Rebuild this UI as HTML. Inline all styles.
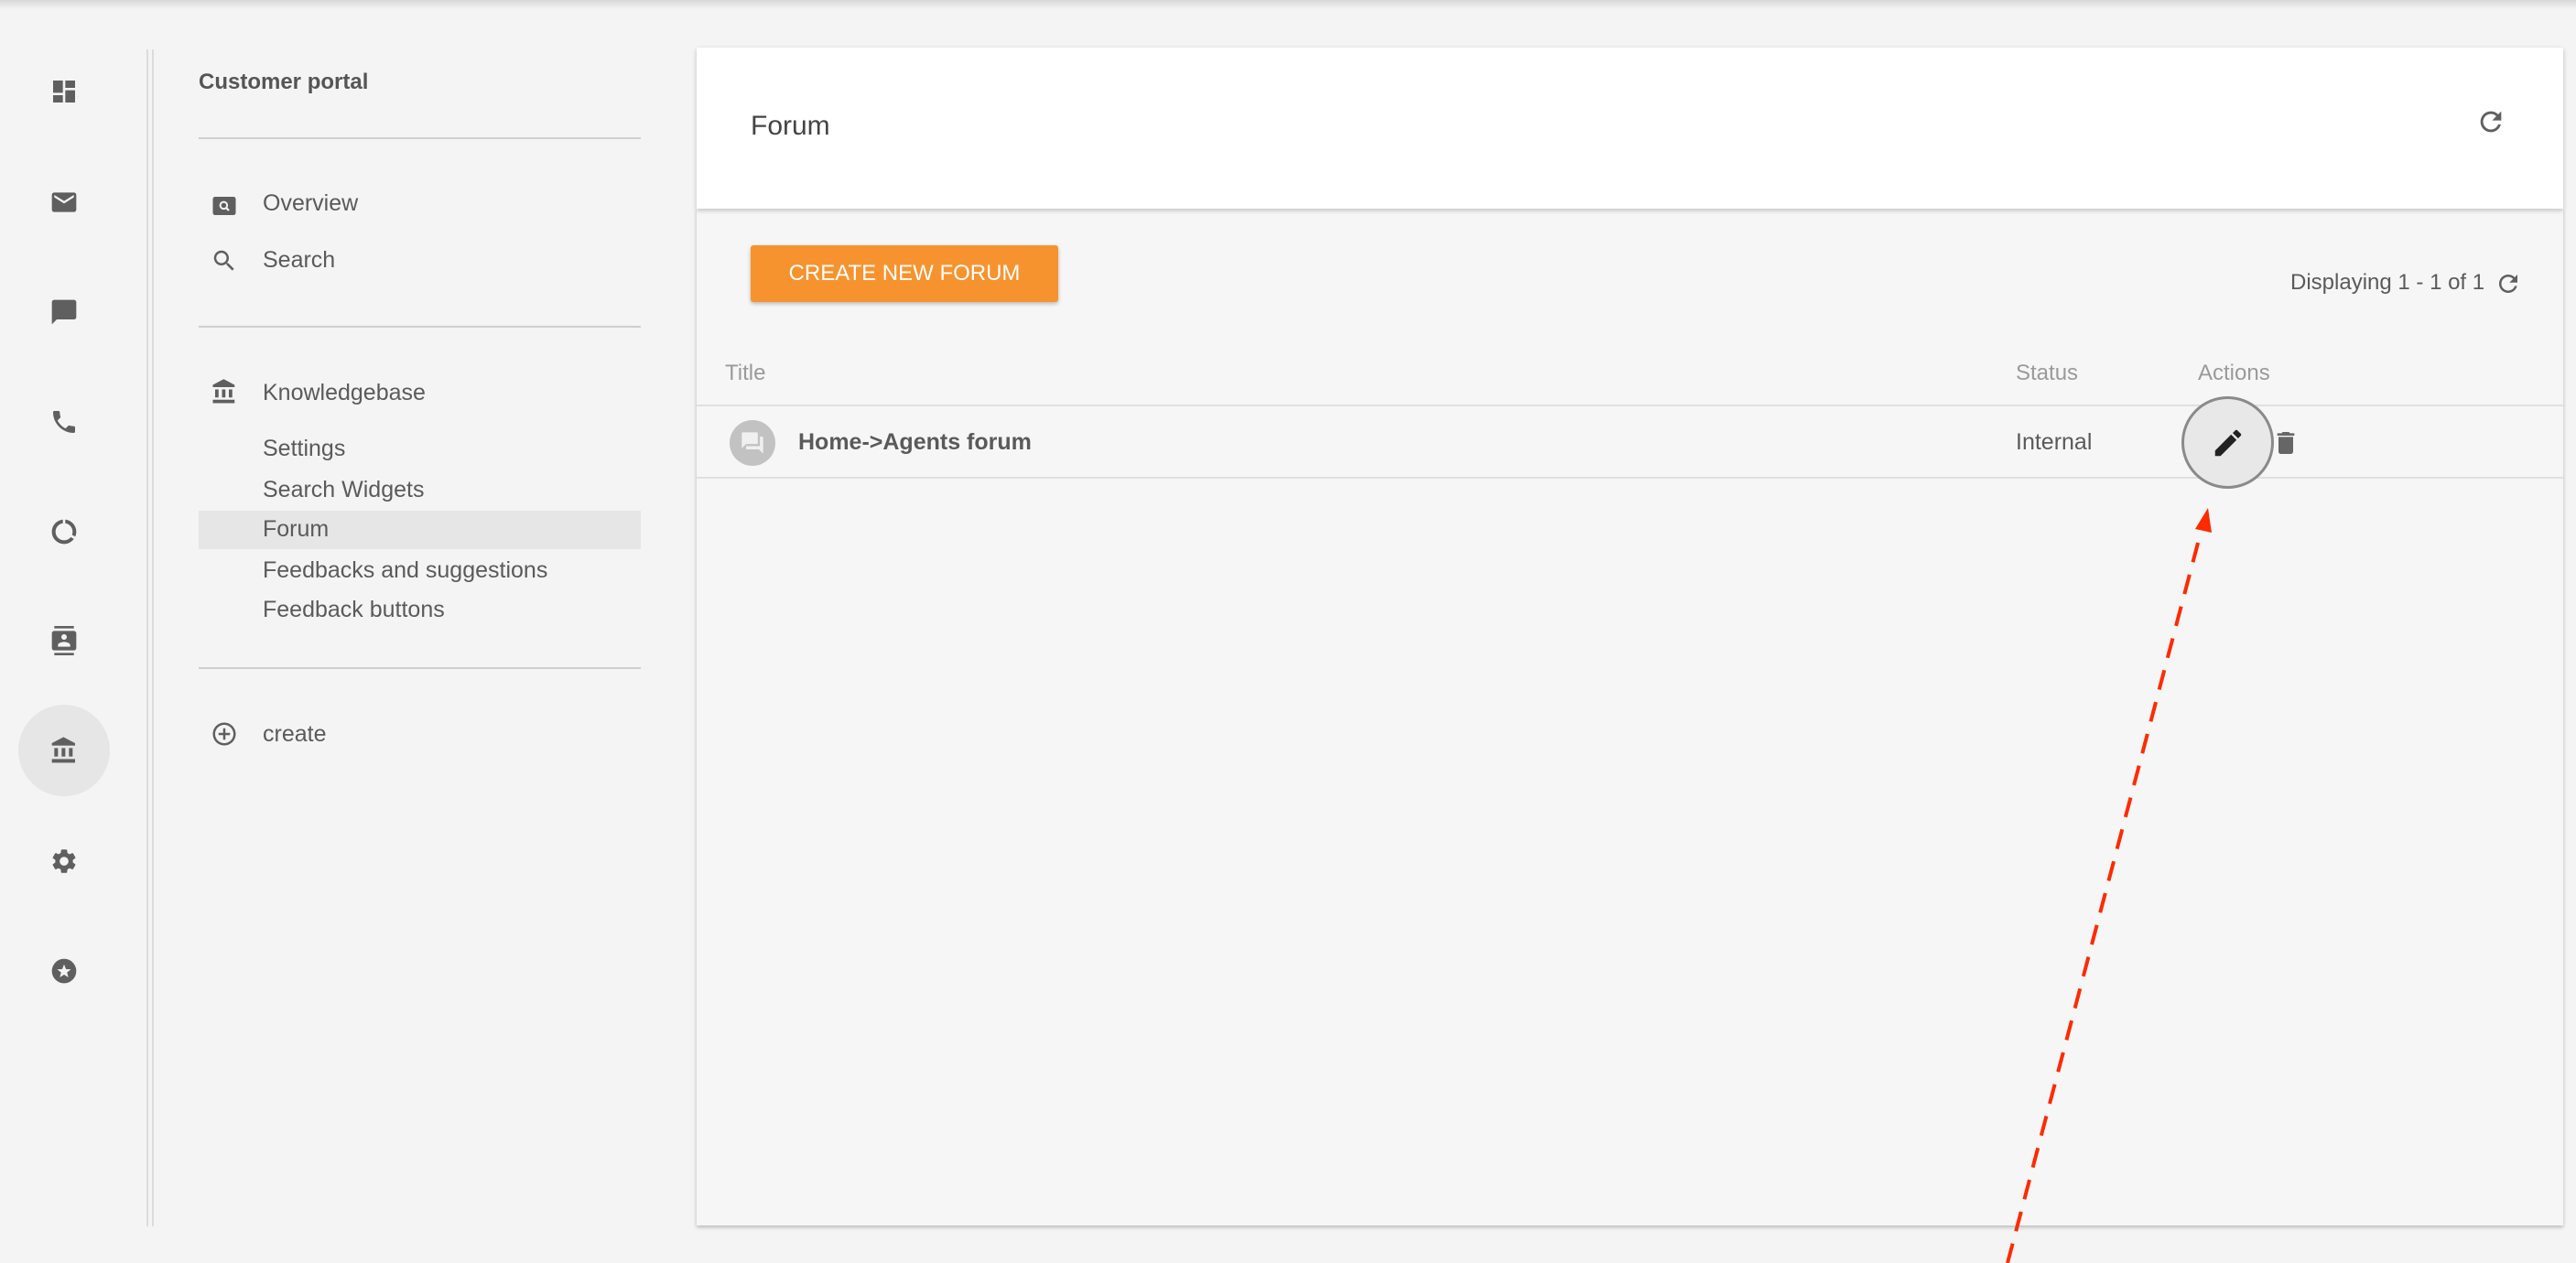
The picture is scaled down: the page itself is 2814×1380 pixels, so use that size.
<!DOCTYPE html>
<html><head><meta charset="utf-8"><style>
*{margin:0;padding:0;box-sizing:border-box}
body{width:2814px;height:1380px;background:#f4f4f4;font-family:"Liberation Sans",Arial,sans-serif;color:#555;position:relative;overflow:hidden}
.abs{position:absolute}
.topsh{left:0;top:0;width:2814px;height:10px;background:linear-gradient(#d8d8d8,#f4f4f4)}
.ic{position:absolute;width:32px;height:32px;fill:#5f5f5f}
.t{position:absolute;font-size:25px;color:#5a5a5a;line-height:30px;white-space:nowrap}
.hr{position:absolute;left:217px;width:483px;height:2px;background:#cfcfcf}
</style></head><body>
<div class="abs topsh"></div>
<div class="abs" style="left:20px;top:770px;width:100px;height:100px;border-radius:50%;background:#e6e6e6"></div>
<svg class="ic" style="left:54px;top:84px" viewBox="0 0 24 24"><path d="M3 13h8V3H3v10zm0 8h8v-6H3v6zm10 0h8V11h-8v10zm0-18v6h8V3h-8z"/></svg>
<svg class="ic" style="left:54px;top:205px" viewBox="0 0 24 24"><path d="M20 4H4c-1.1 0-2 .9-2 2v12c0 1.1.9 2 2 2h16c1.1 0 2-.9 2-2V6c0-1.1-.9-2-2-2zm0 4l-8 5-8-5V6l8 5 8-5v2z"/></svg>
<svg class="ic" style="left:54px;top:325px" viewBox="0 0 24 24"><path d="M20 2H4c-1.1 0-2 .9-2 2v18l4-4h14c1.1 0 2-.9 2-2V4c0-1.1-.9-2-2-2z"/></svg>
<svg class="ic" style="left:54px;top:445px" viewBox="0 0 24 24"><path d="M6.62 10.79c1.44 2.830 3.76 5.14 6.590 6.59l2.2-2.2c.27-.27.67-.36 1.020-.24 1.12.37 2.33.57 3.57.57.55 0 1 .45 1 1V20c0 .55-.45 1-1 1-9.39 0-17-7.61-17-17 0-.55.45-1 1-1h3.5c.55 0 1 .45 1 1 0 1.25.2 2.45.57 3.57.11.35.03.74-.25 1.02l-2.2 2.2z"/></svg>
<svg class="ic" style="left:54px;top:565px" viewBox="0 0 24 24"><path d="M13 2.05v3.03c3.39.49 6 3.39 6 6.92 0 .9-.18 1.75-.48 2.54l2.6 1.53c.56-1.24.88-2.62.88-4.07 0-5.18-3.95-9.45-9-9.95zM12 19c-3.87 0-7-3.130-7-7 0-3.53 2.61-6.43 6-6.92V2.05c-5.06.5-9 4.76-9 9.95 0 5.52 4.47 10 9.99 10 3.31 0 6.24-1.61 8.06-4.09l-2.6-1.53C16.17 17.98 14.21 19 12 19z"/></svg>
<svg class="ic" style="left:54px;top:684px" viewBox="0 0 24 24"><path d="M20 0H4v2h16V0zM4 24h16v-2H4v2zM20 4H4c-1.1 0-2 .9-2 2v12c0 1.1.9 2 2 2h16c1.1 0 2-.9 2-2V6c0-1.1-.9-2-2-2zm-8 2.75c1.24 0 2.25 1.01 2.25 2.25s-1.01 2.25-2.25 2.25S9.75 10.24 9.75 9 10.76 6.75 12 6.75zM17 17H7v-1.5c0-1.67 3.33-2.5 5-2.5s5 .83 5 2.5V17z"/></svg>
<svg class="ic" style="left:54px;top:804px" viewBox="0 0 24 24"><path d="M4 10v7h3v-7H4zm6 0v7h3v-7h-3zM2 22h19v-3H2v3zm14-12v7h3v-7h-3zm-4.5-9L2 6v2h19V6l-9.5-5z"/></svg>
<svg class="ic" style="left:54px;top:925px" viewBox="0 0 24 24"><path d="M19.14 12.94c.04-.3.06-.61.06-.94 0-.32-.02-.64-.07-.94l2.03-1.58c.18-.14.23-.41.12-.61l-1.92-3.32c-.12-.22-.37-.29-.59-.22l-2.39.96c-.5-.38-1.03-.7-1.62-.94l-.36-2.54c-.04-.24-.24-.41-.48-.41h-3.84c-.24 0-.43.17-.47.41l-.36 2.54c-.59.24-1.13.57-1.62.94l-2.39-.96c-.22-.08-.47 0-.59.22L2.74 8.87c-.12.21-.08.47.12.61l2.03 1.58c-.05.3-.09.63-.09.94s.02.64.07.94l-2.030 1.58c-.18.14-.23.41-.12.61l1.92 3.32c.12.22.37.29.59.22l2.39-.96c.5.38 1.03.7 1.62.94l.36 2.54c.05.24.24.41.48.41h3.84c.24 0 .44-.17.47-.41l.36-2.54c.59-.24 1.13-.56 1.62-.94l2.39.96c.22.08.47 0 .59-.22l1.92-3.32c.12-.22.07-.47-.12-.61l-2.01-1.58zM12 15.6c-1.98 0-3.6-1.62-3.6-3.6s1.62-3.6 3.6-3.6 3.6 1.62 3.6 3.6-1.62 3.6-3.6 3.6z"/></svg>
<svg class="ic" style="left:54px;top:1045px" viewBox="0 0 24 24"><circle cx="12" cy="12" r="10"/><path fill="#f4f4f4" d="M12 6.5l1.5 3.9 4.1.2-3.2 2.6 1.1 4-3.5-2.3-3.5 2.3 1.1-4-3.2-2.6 4.1-.2z"/></svg>
<div class="abs" style="left:160px;top:54px;width:2px;height:1286px;background:#dcdcdc"></div>
<div class="abs" style="left:166px;top:54px;width:2px;height:1286px;background:#dcdcdc"></div>

<div class="t" style="left:217px;top:75px;font-weight:bold;font-size:24px;color:#555">Customer portal</div>
<div class="hr" style="top:150px"></div>
<svg class="ic" style="left:230px;top:210px;width:30px;height:30px" viewBox="0 0 24 24"><path d="M20 4H4c-1.1 0-2 .9-2 2v12c0 1.1.9 2 2 2h16c1.1 0 2-.9 2-2V6c0-1.1-.9-2-2-2z"/><circle cx="11.5" cy="11.5" r="3" fill="none" stroke="#f4f4f4" stroke-width="1.6"/><path d="M13.5 13.5l2.5 2.5" stroke="#f4f4f4" stroke-width="1.8"/></svg>
<div class="t" style="left:287px;top:207px">Overview</div>
<svg class="ic" style="left:230px;top:270px;width:30px;height:30px" viewBox="0 0 24 24"><path d="M15.5 14h-.79l-.28-.27C15.41 12.59 16 11.11 16 9.5 16 5.91 13.09 3 9.5 3S3 5.91 3 9.5 5.91 16 9.5 16c1.61 0 3.09-.59 4.23-1.57l.27.28v.79l5 4.99L20.49 19l-4.99-5zm-6 0C7.01 14 5 11.99 5 9.5S7.01 5 9.5 5 14 7.01 14 9.5 11.99 14 9.5 14z"/></svg>
<div class="t" style="left:287px;top:269px">Search</div>
<div class="hr" style="top:356px"></div>
<svg class="ic" style="left:230px;top:413px;width:30px;height:30px" viewBox="0 0 24 24"><path d="M4 10v7h3v-7H4zm6 0v7h3v-7h-3zM2 22h19v-3H2v3zm14-12v7h3v-7h-3zm-4.5-9L2 6v2h19V6l-9.5-5z"/></svg>
<div class="t" style="left:287px;top:414px">Knowledgebase</div>
<div class="t" style="left:287px;top:475px">Settings</div>
<div class="t" style="left:287px;top:520px">Search Widgets</div>
<div class="abs" style="left:217px;top:558px;width:483px;height:42px;background:#e6e6e6"></div>
<div class="t" style="left:287px;top:563px">Forum</div>
<div class="t" style="left:287px;top:608px">Feedbacks and suggestions</div>
<div class="t" style="left:287px;top:651px">Feedback buttons</div>
<div class="hr" style="top:729px"></div>
<svg class="ic" style="left:230px;top:787px;width:30px;height:30px" viewBox="0 0 24 24"><path d="M13 7h-2v4H7v2h4v4h2v-4h4v-2h-4V7zm-1-5C6.48 2 2 6.48 2 12s4.48 10 10 10 10-4.48 10-10S17.52 2 12 2zm0 18c-4.41 0-8-3.59-8-8s3.59-8 8-8 8 3.59 8 8-3.59 8-8 8z"/></svg>
<div class="t" style="left:287px;top:787px">create</div>

<div class="abs" style="left:761px;top:228px;width:2039px;height:1111px;background:#f6f6f6;box-shadow:0 2px 4px rgba(0,0,0,.25)"></div>
<div class="abs" style="left:761px;top:52px;width:2039px;height:176px;background:#fff;box-shadow:0 2px 5px rgba(0,0,0,.22)"></div>
<div class="t" style="left:820px;top:120px;font-size:30px;line-height:36px;color:#444">Forum</div>
<svg class="ic" style="left:2704px;top:116px;width:34px;height:34px" viewBox="0 0 24 24"><path d="M17.65 6.35C16.2 4.9 14.21 4 12 4c-4.42 0-7.99 3.58-7.99 8s3.57 8 7.99 8c3.73 0 6.84-2.55 7.73-6h-2.08c-.82 2.33-3.04 4-5.65 4-3.31 0-6-2.69-6-6s2.69-6 6-6c1.66 0 3.14.69 4.22 1.78L13 11h7V4l-2.35 2.35z"/></svg>

<div class="abs" style="left:820px;top:268px;width:336px;height:62px;background:#f7932e;border-radius:3px;box-shadow:0 2px 4px rgba(0,0,0,.25);color:#fff;font-size:24px;line-height:62px;text-align:center">CREATE NEW FORUM</div>
<div class="t" style="left:2502px;top:294px;font-size:24px">Displaying 1 - 1 of 1</div>
<svg class="ic" style="left:2725px;top:295px;width:30px;height:30px" viewBox="0 0 24 24"><path d="M17.65 6.35C16.2 4.9 14.21 4 12 4c-4.42 0-7.99 3.58-7.990 8s3.57 8 7.99 8c3.73 0 6.84-2.55 7.73-6h-2.08c-.82 2.33-3.04 4-5.65 4-3.31 0-6-2.69-6-6s2.69-6 6-6c1.66 0 3.14.69 4.22 1.78L13 11h7V4l-2.35 2.35z"/></svg>

<div class="t" style="left:792px;top:393px;font-size:24px;color:#9a9a9a">Title</div>
<div class="t" style="left:2202px;top:393px;font-size:24px;color:#9a9a9a">Status</div>
<div class="t" style="left:2401px;top:393px;font-size:24px;color:#9a9a9a">Actions</div>
<div class="abs" style="left:761px;top:442px;width:2039px;height:2px;background:#e0e0e0"></div>
<div class="abs" style="left:761px;top:521px;width:2039px;height:2px;background:#e0e0e0"></div>
<div class="abs" style="left:797px;top:459px;width:50px;height:50px;border-radius:50%;background:#c2c2c2"></div>
<svg class="abs" style="left:808px;top:470px;width:28px;height:28px;fill:#f0f0f0" viewBox="0 0 24 24"><path d="M21 6h-2v9H6v2c0 .55.45 1 1 1h11l4 4V7c0-.55-.45-1-1-1zm-4 6V3c0-.55-.45-1-1-1H3c-.55 0-1 .45-1 1v14l4-4h10c.55 0 1-.45 1-1z"/></svg>
<div class="t" style="left:872px;top:468px;font-weight:bold;font-size:25px">Home-&gt;Agents forum</div>
<div class="t" style="left:2202px;top:468px;font-size:25px">Internal</div>
<div class="abs" style="left:2383px;top:433px;width:101px;height:101px;border-radius:50%;background:#e8e8e8;border:3px solid #8a8a8a"></div>
<svg class="abs" style="left:2415px;top:465px;width:38px;height:38px;fill:#222" viewBox="0 0 24 24"><path d="M3 17.25V21h3.75L17.81 9.94l-3.75-3.75L3 17.25zM20.71 7.04c.39-.39.39-1.02 0-1.41l-2.34-2.34c-.39-.39-1.02-.39-1.41 0l-1.83 1.83 3.75 3.75 1.83-1.830z"/></svg>
<svg class="abs" style="left:2481px;top:468px;width:32px;height:32px;fill:#666" viewBox="0 0 24 24"><path d="M6 19c0 1.1.9 2 2 2h8c1.1 0 2-.9 2-2V7H6v12zM19 4h-3.5l-1-1h-5l-1 1H5v2h14V4z"/></svg>

<svg class="abs" style="left:0;top:0;width:2814px;height:1380px" viewBox="0 0 2814 1380">
<line x1="2193" y1="1380" x2="2404" y2="582" stroke="#ff2a00" stroke-width="4" stroke-dasharray="22,14"/>
<polygon points="2412,555 2398,578 2416,582" fill="#ff2a00"/>
</svg>
</body></html>
